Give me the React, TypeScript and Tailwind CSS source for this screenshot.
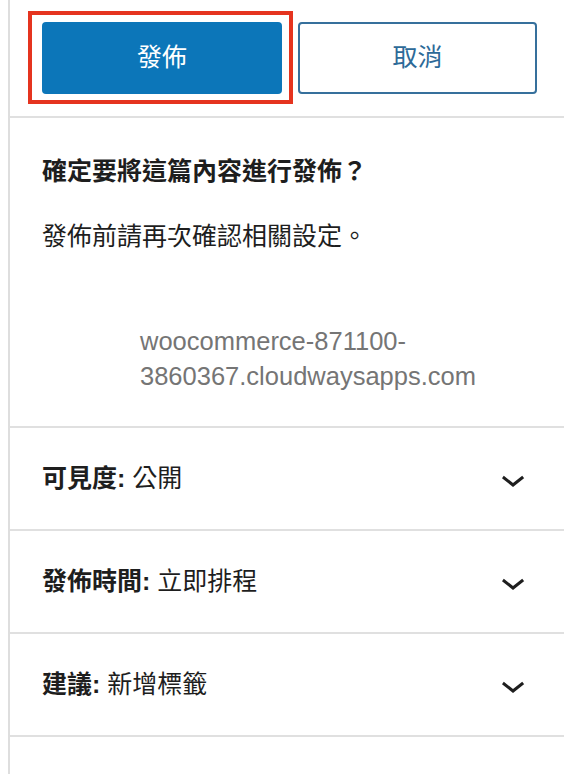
import { ReactNode } from "react";

const font = { fontFamily: '"Liberation Sans", "Noto Sans CJK TC", sans-serif' };

function Chevron() {
  return (
    <svg width="48" height="48" viewBox="0 0 24 24" className="shrink-0 text-[#1e1e1e]">
      <path d="M17.5 11.6L12 16l-5.5-4.4.9-1.2L12 14l4.6-3.6 1 1.2z" fill="currentColor" />
    </svg>
  );
}

function Row({ label, value }: { label: string; value: ReactNode }) {
  return (
    <div className="flex h-[103px] items-center justify-between border-b-2 border-[#e0e0e0] pl-[32px] pr-[27px]">
      <p className="text-[25px] leading-[35px] text-[#1e1e1e]">
        <span className="font-semibold">{label}:</span> {value}
      </p>
      <Chevron />
    </div>
  );
}

export default function App() {
  return (
    <div className="h-[774px] w-[564px] overflow-hidden bg-white" style={font}>
      <div className="ml-[8px] h-full border-l-2 border-[#dedede]">
        {/* Actions */}
        <div className="flex h-[118px] items-start gap-4 border-b-2 border-[#e0e0e0] pl-[32px] pr-[27px] pt-[22px]">
          <div className="relative h-[72px]">
            <button className="h-[72px] w-[240px] rounded-[4px] bg-[#0c76b9] text-[25px] text-white">
              發佈
            </button>
            {/* highlight box */}
            <span className="pointer-events-none absolute -bottom-[10px] -left-[14px] -right-[11px] -top-[11px] border-4 border-[#e5341f]" />
          </div>
          <button className="h-[72px] w-[240px] rounded-[4px] border-2 border-[#36709c] bg-white text-[25px] text-[#2d6a98]">
            取消
          </button>
        </div>

        {/* Pre-publish message */}
        <div className="border-b-2 border-[#e0e0e0] pb-[32px] pl-[32px] pt-[36px]">
          <p className="text-[25px] font-semibold leading-[35px] text-[#1e1e1e]">確定要將這篇內容進行發佈？</p>
          <p className="mt-[30px] text-[25px] leading-[35px] text-[#1e1e1e]">發佈前請再次確認相關設定。</p>
          <div className="mt-[70px] pl-[98px] text-[25.5px] leading-[35px] text-[#757575]">
            <p>woocommerce-871100-</p>
            <p>3860367.cloudwaysapps.com</p>
          </div>
        </div>

        <Row label="可見度" value="公開" />
        <Row label="發佈時間" value="立即排程" />
        <Row label="建議" value="新增標籤" />
      </div>
    </div>
  );
}
